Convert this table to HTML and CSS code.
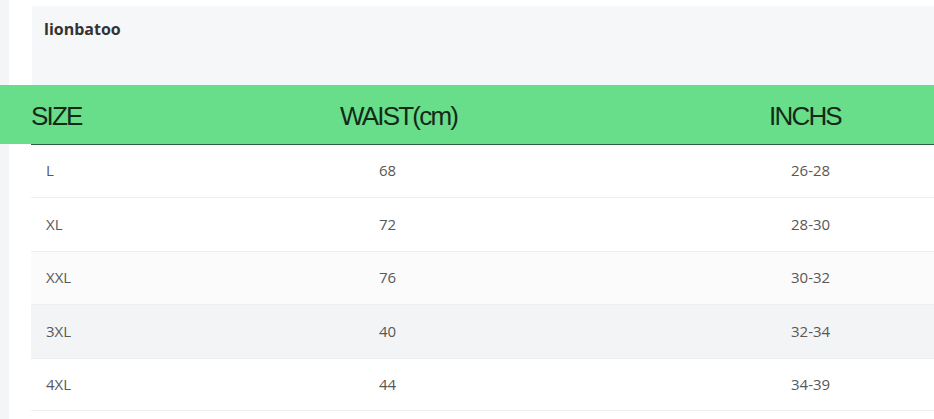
FILE: index.html
```html
<!DOCTYPE html>
<html lang="en">
<head>
<meta charset="utf-8">
<title>lionbatoo size chart</title>
<link rel="stylesheet" href="styles.css">
</head>
<body>
<div class="page">
  <div class="top">
    <div class="panel-head">lionbatoo</div>
  </div>
  <div class="green-head">
    <div class="gh-cell">SIZE</div>
    <div class="gh-cell">WAIST(cm)</div>
    <div class="gh-cell">INCHS</div>
  </div>
  <div class="table">
    <div class="row">
      <div class="cell">L</div><div class="cell">68</div><div class="cell">26-28</div>
    </div>
    <div class="row row-tall">
      <div class="cell">XL</div><div class="cell">72</div><div class="cell">28-30</div>
    </div>
    <div class="row row-faint">
      <div class="cell">XXL</div><div class="cell">76</div><div class="cell">30-32</div>
    </div>
    <div class="row row-gray row-tall">
      <div class="cell">3XL</div><div class="cell">40</div><div class="cell">32-34</div>
    </div>
    <div class="row row-short">
      <div class="cell">4XL</div><div class="cell">44</div><div class="cell">34-39</div>
    </div>
  </div>
</div>
</body>
</html>
```
FILE: styles.css
```css
html, body {
  margin: 0;
  padding: 0;
}
body {
  width: 934px;
  height: 419px;
  overflow: hidden;
  background: linear-gradient(to right, #f4f5f7 0, #f4f5f7 9px, #ffffff 9px);
  font-family: "Open Sans", "Liberation Sans", sans-serif;
}
.page {
  display: flex;
  flex-direction: column;
}
.top {
  padding-top: 6px;
  padding-left: 32px;
}
.panel-head {
  height: 79px;
  box-sizing: border-box;
  background: #f6f7f9;
  padding: 12px 12px 0;
  font-weight: 700;
  font-size: 16px;
  line-height: 22px;
  color: #333333;
}
.green-head {
  height: 59px;
  background: #68de8a;
  display: grid;
  grid-template-columns: 309px 429px 1fr;
  align-items: center;
  padding-left: 31px;
  font-family: "Liberation Sans", Arial, sans-serif;
  font-size: 26px;
  letter-spacing: -1.8px;
  color: #142a19;
}
.gh-cell {
  line-height: 30px;
  padding-top: 2px;
}
.table {
  border-top: 1px solid #2d5e45;
  margin-left: 31px;
}
.row {
  display: grid;
  grid-template-columns: 333px 412px 1fr;
  align-items: center;
  height: 53px;
  box-sizing: border-box;
  padding-left: 15px;
  padding-bottom: 2px;
  border-bottom: 1px solid #eceef0;
  background: #ffffff;
  font-size: 15px;
  color: #585858;
}
.row-tall {
  height: 54px;
}
.row-short {
  height: 52px;
}
.row-faint {
  background: #fbfbfc;
}
.row-gray {
  background: #f3f4f6;
}
.cell {
  line-height: 20px;
}
```
